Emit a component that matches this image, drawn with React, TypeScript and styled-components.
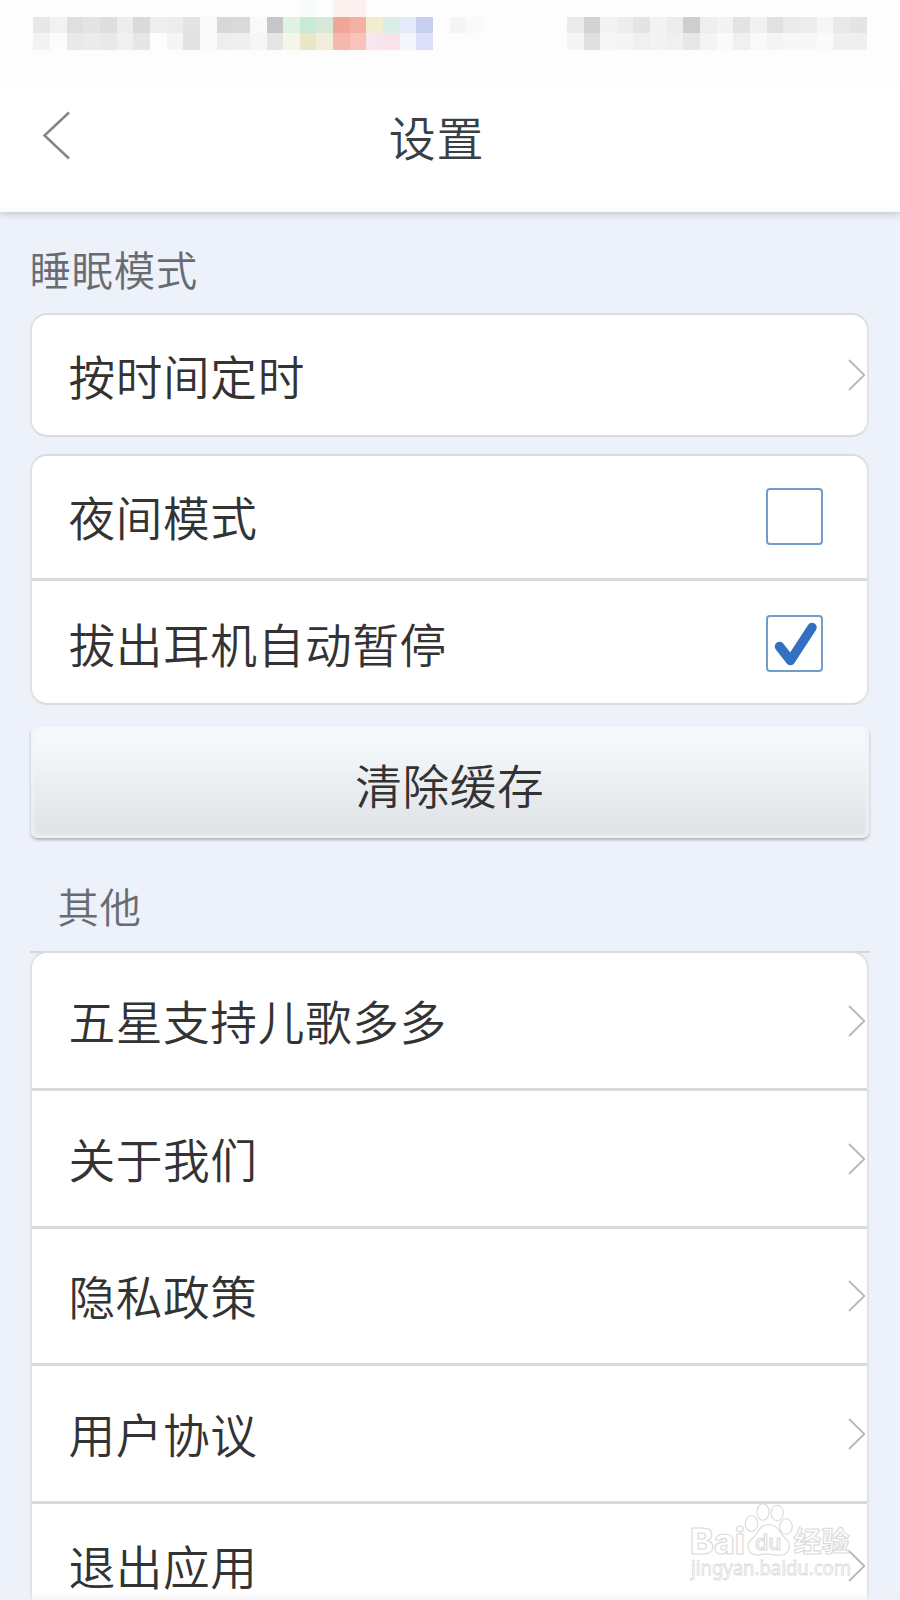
import React, { useState } from 'react';
import styled, { createGlobalStyle } from 'styled-components';

const GlobalStyle = createGlobalStyle`
  *, *::before, *::after { box-sizing: border-box; }
  html, body { margin: 0; background: #edf1fa; overflow: hidden; }
  button { font: inherit; color: inherit; border: 0; padding: 0; background: none; }
`;

const Screen = styled.div`
  position: relative;
  display: flex;
  flex-direction: column;
  width: 900px;
  height: 1600px;
  overflow: hidden;
  background: #edf1fa;
  color: #333;
  font-family: 'Noto Sans CJK SC', sans-serif;
  font-weight: 350;
`;

const Header = styled.header`
  flex: none;
  height: 212px;
  background: linear-gradient(#fdfdfd 0, #fdfdfd 80px, #fff 90px, #fff 200px, #fcfcfc 212px);
  box-shadow: 0 2px 7px rgba(90, 95, 110, 0.3);
`;

const StatusBar = styled.div`
  display: flex;
  height: 67px;
  padding: 0 33.333px;
  justify-content: space-between;
`;

const Mosaic = styled.div<{ $columns: number }>`
  display: grid;
  grid-template-columns: repeat(${(p) => p.$columns}, 16.6667px);
  grid-auto-rows: 16.6667px;
`;

const Tile = styled.span<{ $color: string }>`
  background: ${(p) => p.$color};
`;

const TitleBar = styled.div`
  display: grid;
  grid-template-columns: 90px 1fr 117px;
  align-items: center;
  height: 138px;
`;

const BackButton = styled.button`
  display: flex;
  padding-left: 41px;
`;

const Title = styled.h1`
  margin: 0;
  font-size: 47px;
  letter-spacing: 0.8px;
  line-height: 60px;
  font-weight: 350;
  text-align: center;
  color: #3a3f44;
`;

const SectionLabel = styled.h2<{ $indent?: number; $top: number; $height: number }>`
  flex: none;
  height: ${(p) => p.$height}px;
  margin: 0;
  padding: ${(p) => p.$top}px 0 0 ${(p) => p.$indent || 0}px;
  font-size: 41.4px;
  letter-spacing: 0.7px;
  line-height: 50px;
  font-weight: 350;
  color: #686c72;
`;

const Content = styled.main`
  display: flex;
  flex-direction: column;
  padding: 0 31px 0 29.5px;
`;

const Card = styled.section<{ $gap?: number }>`
  flex: none;
  border: 2px solid #dadddf;
  border-left-color: #dfe3e4;
  border-right-color: #dfe3e4;
  border-radius: 17px;
  background: #fff;
  margin-bottom: ${(p) => p.$gap || 0}px;
`;

const CardTopRule = styled.div`
  height: 2px;
  margin-right: -1px;
  margin-bottom: -2px;
  background: #d3d7dc;
`;

const Row = styled.div<{ $height: number }>`
  display: flex;
  align-items: center;
  justify-content: space-between;
  height: ${(p) => p.$height}px;
  padding-left: 37px;
  padding-right: 1px;

  & + & {
    border-top: 3px solid #d9dbdb;
  }
`;

const RowText = styled.span<{ $drop?: number }>`
  font-size: 46.7px;
  letter-spacing: 0.6px;
  line-height: 60px;
  white-space: nowrap;
  padding-bottom: 2px;
  margin-top: ${(p) => p.$drop || 0}px;
`;

const CheckBox = styled.button<{ $drop?: number }>`
  display: flex;
  align-items: center;
  justify-content: center;
  width: 57px;
  height: 57px;
  margin-right: 43px;
  margin-top: ${(p) => p.$drop || 0}px;
  border: 2px solid #739cc6;
  border-radius: 4px;
  background: #fff;
`;

const ClearButton = styled.button`
  flex: none;
  height: 112px;
  margin: 0 0 0 1px;
  padding-top: 3px;
  border-radius: 7px;
  background: linear-gradient(#f6fbfe 0%, #f3f7fa 22%, #e9edef 55%, #e1e5e8 88%, #e0e4e6 100%);
  box-shadow:
    inset 0 0 3px 3px rgba(240, 243, 248, 0.75),
    0 2px 3px rgba(80, 84, 96, 0.4);
  font-size: 46.7px;
  letter-spacing: 0.6px;
  line-height: 60px;
`;

const BottomFade = styled.div`
  position: absolute;
  inset: auto 0 0 0;
  height: 8px;
  background: linear-gradient(rgba(240, 240, 243, 0), rgba(240, 240, 243, 0.6));
`;

const Watermark = styled.svg`
  position: absolute;
  left: 680px;
  top: 1496px;
`;

const leftTop = [
  '#e8e8e8', '#f2f2f2', '#dfdfdf', '#e4e4e4', '#dedede', '#ededed', '#dadada', '#eeeeee', '#ededed', '#e3e3e3', '#fafafa', '#d8d8d8',
  '#dadada', '#f9f9f9', '#c7c7c7', '#dff2e3', '#c7ead7', '#d7e7d8', '#f1a697', '#f5b0a4', '#f0edd0', '#d9eee6', '#e3eafa', '#c7cff1',
  '#fdfdfd', '#f5f5f5', '#fafafa',
];
const leftBottom = [
  '#f3f3f3', '#fcfcfc', '#e9e9e9', '#ebebeb', '#e9e9e9', '#f0f0f0', '#e6e6e6', '#fdfdfd', '#f5f5f5', '#e2e2e2', '#fafafa', '#eeeeee',
  '#efefef', '#f6f6f6', '#e5e5e5', '#f3f6e9', '#ebe6c5', '#f0eddb', '#f5b8ad', '#f9c2bb', '#f8e5ef', '#f8e3eb', '#f5f5fc', '#dcdff7',
  '#fdfdfd', '#fdfdfd', '#fdfdfd',
];
const topTints: Record<number, string> = { 16: '#f7fbf9', 18: '#fdf2ef', 19: '#fdf2ef' };
const leftAbove = leftTop.map((_, i) => topTints[i] || '#fdfdfd');
const rightTop = [
  '#ebebeb', '#d2d2d2', '#f3f3f3', '#ededed', '#e4e4e4', '#f2f2f2', '#ececec', '#cecece', '#eeeeee',
  '#f3f3f3', '#e3e3e3', '#f1f1f1', '#e1e1e1', '#ebebeb', '#ececec', '#f6f6f6', '#e9e9e9', '#e4e4e4',
];
const rightBottom = [
  '#f5f5f5', '#e0e0e0', '#f6f6f6', '#f5f5f5', '#f0f0f0', '#f3f3f3', '#f0f0f0', '#e7e7e7', '#f4f4f4',
  '#fafafa', '#f0f0f0', '#f9f9f9', '#f4f4f4', '#f7f7f7', '#f7f7f7', '#fafafa', '#efefef', '#efefef',
];
const rightAbove = rightTop.map(() => '#fdfdfd');

function Tiles({ rows }: { rows: string[][] }) {
  return (
    <Mosaic $columns={rows[0].length}>
      {rows.flat().map((color, i) => (
        <Tile key={i} $color={color} />
      ))}
    </Mosaic>
  );
}

function Chevron() {
  return (
    <svg width="18" height="34" viewBox="0 0 18 34" fill="none" stroke="#b9b9b9" strokeWidth="1.9">
      <path d="M1 2 L16.3 17 L1 32" />
    </svg>
  );
}

function Toggle({ initial = false, label, drop }: { initial?: boolean; label: string; drop?: number }) {
  const [on, setOn] = useState(initial);
  return (
    <CheckBox $drop={drop} role="checkbox" aria-checked={on} aria-label={label} onClick={() => setOn(!on)}>
      {on && (
        <svg width="52" height="52" viewBox="0 0 52 52" fill="none" stroke="#3470c1" strokeWidth="9.5" strokeLinecap="round" strokeLinejoin="round">
          <path d="M10.5 29.5 L21.5 43.5 L43 10.5" />
        </svg>
      )}
    </CheckBox>
  );
}

function BaiduMark() {
  return (
    <Watermark width="180" height="94" viewBox="680 1496 180 94" fill="#fff" stroke="#dadada" strokeWidth="1.1">
      <text x="690" y="1553.5" textLength="55" lengthAdjust="spacingAndGlyphs" fontFamily="Inter, sans-serif" fontWeight="800" fontSize="36">Bai</text>
      <ellipse cx="751.5" cy="1523.5" rx="6.2" ry="8" />
      <ellipse cx="763" cy="1512" rx="6" ry="8.3" />
      <ellipse cx="777.2" cy="1513" rx="6.2" ry="7.8" />
      <ellipse cx="786" cy="1526.5" rx="6.3" ry="7.8" />
      <path d="M768.5 1524.5 C759 1524.5 758 1534 752 1539 C745 1544 748 1555 757 1555 C762 1555 765 1553.5 769 1554 C775 1555 778 1556 782 1555 C790 1553.5 792 1543 785 1538 C779 1533 778.5 1524.5 768.5 1524.5 Z" />
      <text x="755" y="1549.5" textLength="26" lengthAdjust="spacingAndGlyphs" fontFamily="Inter, sans-serif" fontWeight="500" fontSize="21">du</text>
      <text x="793.5" y="1551.5" textLength="56" lengthAdjust="spacingAndGlyphs" fontFamily="'Noto Sans CJK SC', sans-serif" fontWeight="700" fontSize="28">经验</text>
      <text x="691" y="1575" textLength="160" lengthAdjust="spacingAndGlyphs" fontFamily="'Noto Sans', sans-serif" fontWeight="400" fontSize="19" strokeWidth="0.8">jingyan.baidu.com</text>
    </Watermark>
  );
}

const otherRows = [
  { text: '五星支持儿歌多多', height: 135.3 },
  { text: '关于我们', height: 137.6 },
  { text: '隐私政策', height: 137.6 },
  { text: '用户协议', height: 137.6 },
  { text: '退出应用', height: 126 },
];

export default function App() {
  return (
    <>
      <GlobalStyle />
      <Screen>
        <Header>
          <StatusBar>
            <Tiles rows={[leftAbove, leftTop, leftBottom]} />
            <Tiles rows={[rightAbove, rightTop, rightBottom]} />
          </StatusBar>
          <TitleBar>
            <BackButton aria-label="返回">
              <svg width="30" height="50" viewBox="0 0 30 50" fill="none" stroke="#858585" strokeWidth="2.5">
                <path d="M28 1.5 L3.5 24.5 L28 47.5" />
              </svg>
            </BackButton>
            <Title>设置</Title>
          </TitleBar>
        </Header>
        <Content>
          <SectionLabel $top={31} $height={101}>睡眠模式</SectionLabel>
          <Card $gap={17}>
            <Row $height={120}>
              <RowText $drop={2}>按时间定时</RowText>
              <Chevron />
            </Row>
          </Card>
          <Card $gap={21}>
            <Row $height={122}>
              <RowText>夜间模式</RowText>
              <Toggle label="夜间模式" drop={-1} />
            </Row>
            <Row $height={125}>
              <RowText $drop={4}>拔出耳机自动暂停</RowText>
              <Toggle label="拔出耳机自动暂停" initial drop={2} />
            </Row>
          </Card>
          <ClearButton>清除缓存</ClearButton>
          <SectionLabel $top={42} $height={113} $indent={28}>其他</SectionLabel>
          <CardTopRule />
          <Card>
            {otherRows.map((row) => (
              <Row key={row.text} $height={row.height}>
                <RowText>{row.text}</RowText>
                <Chevron />
              </Row>
            ))}
          </Card>
        </Content>
        <BaiduMark />
        <BottomFade />
      </Screen>
    </>
  );
}
